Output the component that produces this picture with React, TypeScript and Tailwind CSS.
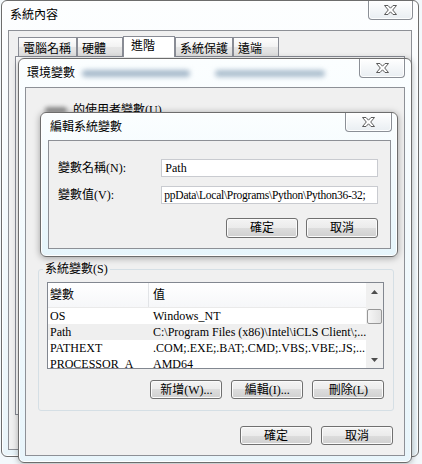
import React from 'react';

const font = "font-['Liberation_Serif','Noto_Sans_CJK_TC',serif]";

function CloseButton({ className }: { className: string }) {
  return (
    <div
      className={`flex items-center justify-center rounded-b-[4px] border border-t-0 border-[#8b8f96] bg-linear-to-b from-[#ffffff] to-[#e9eef2] shadow-[inset_0_0_0_1px_rgba(255,255,255,0.9)] ${className}`}
    >
      <svg width="13" height="10" viewBox="0 0 13 10">
        <polygon
          points="0.5,0.5 4,0.5 6.5,3.2 9,0.5 12.5,0.5 8.7,5 12.5,9.5 9,9.5 6.5,6.8 4,9.5 0.5,9.5 4.3,5"
          fill="#fff"
          stroke="#5b5b5b"
          strokeWidth="1"
          strokeLinejoin="round"
        />
      </svg>
    </div>
  );
}

function Button({ label }: { label: string }) {
  return (
    <div className="flex h-[19px] w-[72px] items-center justify-center rounded-[3px] border border-[#707070] bg-[linear-gradient(to_bottom,#f4f4f4_0%,#ebebeb_50%,#dddddd_50%,#d0d0d0_100%)] shadow-[inset_0_0_0_1px_#fbfbfb]">
      {label}
    </div>
  );
}

type Row = { name: string; value: string; hl?: boolean };

const rows: Row[] = [
  { name: 'OS', value: 'Windows_NT' },
  { name: 'Path', value: 'C:\\Program Files (x86)\\Intel\\iCLS Client\\;...', hl: true },
  { name: 'PATHEXT', value: '.COM;.EXE;.BAT;.CMD;.VBS;.VBE;.JS;...' },
  { name: 'PROCESSOR_A', value: 'AMD64' },
];

const tabs = ['電腦名稱', '硬體', '進階', '系統保護', '遠端'];
const tabWidths = ['w-[59px]', 'w-[46px]', 'w-[52px]', 'w-[58px]', 'w-[46px]'];

export default function App() {
  return (
    <div className={`relative h-[464px] w-[422px] overflow-hidden bg-[#f3f8fb] text-[12px] leading-[14px] text-black ${font}`}>
      {/* 系統內容 */}
      <div className="absolute left-[1px] top-0 flex h-[457px] w-[418px] flex-col rounded-[6px] border border-[#6d6d6d] bg-linear-to-b from-[#fdfeff] to-[#eaf5fa] shadow-[inset_0_0_0_1px_#ffffff]">
        <div className="flex h-[29px] items-start justify-between pl-[8px] pr-[5px]">
          <span className="mt-[7px]">系統內容</span>
          <CloseButton className="h-[19px] w-[45px]" />
        </div>
        <div className="mx-[6px] mb-[6px] flex flex-1 flex-col border border-[#8d9096] bg-[#f0f0f0] px-[6px] pt-[5px]">
          <div className="flex h-[20px] items-end pl-[3px]">
            {tabs.map((t, i) =>
              i === 2 ? (
                <div
                  key={t}
                  className={`relative z-10 -mb-px h-[21px] border border-b-0 border-[#898c95] bg-white pl-[7px] pt-[2px] ${tabWidths[i]}`}
                >
                  {t}
                </div>
              ) : (
                <div
                  key={t}
                  className={`h-[19px] border border-b-0 border-[#898c95] bg-[linear-gradient(to_bottom,#fdfdfd,#f2f2f2_50%,#e6e6e6_50%,#dedede)] pl-[4px] pt-[4px] ${tabWidths[i]}`}
                >
                  {t}
                </div>
              ),
            )}
          </div>
          <div className="h-[359px] border border-[#898c95] bg-white" />
        </div>
      </div>

      {/* 環境變數 */}
      <div className="absolute left-[18px] top-[58px] flex h-[405px] w-[394px] flex-col rounded-[6px] border border-[#6d6d6d] bg-linear-to-b from-[#fbfeff] to-[#e8f5fb] shadow-[inset_0_0_0_1px_#ffffff,0_1px_6px_rgba(0,0,0,0.3)]">
        <div className="flex h-[28px] items-start justify-between pl-[8px] pr-[6px]">
          <div className="mt-[7px] flex items-center">
            <span>環境變數</span>
            <div className="ml-[7px] h-[7px] w-[108px] rounded-full bg-[#a5b8ca] blur-[2.5px]" />
            <div className="ml-[25px] h-[7px] w-[110px] rounded-full bg-[#abbece] blur-[2.5px]" />
          </div>
          <CloseButton className="h-[19px] w-[46px]" />
        </div>
        <div className="mx-[6px] mb-[6px] flex flex-1 flex-col border border-[#8d9096] bg-[#f0f0f0] pl-[12px] pr-[10px]">
          {/* user variables, mostly under the edit dialog */}
          <div className="mt-[15px] flex h-[159px] flex-col">
            <div className="flex items-center pl-[7px]">
              <div className="h-[6px] w-[22px] rounded-full bg-[#8c8c8c] blur-[2px]" />
              <span className="ml-[6px]">的使用者變數(U)</span>
            </div>
          </div>

          <fieldset className="rounded-[3px] border border-[#d5dfe5] pb-[11px]">
            <legend className="ml-[4px] px-[2px]">系統變數(S)</legend>
            <div className="flex flex-col pl-[8px] pr-[9px]">
              <div className="mt-[6px] flex h-[87px] overflow-hidden border border-[#828790] bg-white">
                <div className="flex flex-1 flex-col">
                  <div className="flex h-[25px] shrink-0 items-center border-b border-[#eaeaea] bg-linear-to-b from-[#ffffff] to-[#f6f7f9]">
                    <div className="flex h-full w-[101px] items-center border-r border-[#e2e4e7] pl-[2px]">變數</div>
                    <div className="pl-[4px]">值</div>
                  </div>
                  {rows.map((r) => (
                    <div
                      key={r.name}
                      className={`flex h-[16px] shrink-0 items-center whitespace-nowrap ${r.hl ? 'bg-[#efefef]' : ''}`}
                    >
                      <div className="w-[101px] pl-[2px]">{r.name}</div>
                      <div className="pl-[4px]">{r.value}</div>
                    </div>
                  ))}
                </div>
                <div className="flex w-[17px] flex-col bg-[#f0f0f0]">
                  <div className="flex h-[17px] items-center justify-center">
                    <svg width="7" height="4" viewBox="0 0 7 4">
                      <polygon points="3.5,0 7,4 0,4" fill="#4d4d4d" />
                    </svg>
                  </div>
                  <div className="mx-[1px] mt-[9px] h-[15px] rounded-[2px] border border-[#979797] bg-linear-to-r from-[#f6f6f6] to-[#e2e2e2]" />
                  <div className="flex-1" />
                  <div className="flex h-[17px] items-center justify-center">
                    <svg width="7" height="4" viewBox="0 0 7 4">
                      <polygon points="0,0 7,0 3.5,4" fill="#4d4d4d" />
                    </svg>
                  </div>
                </div>
              </div>
              <div className="mt-[11px] flex justify-end gap-[9px]">
                <Button label="新增(W)..." />
                <Button label="編輯(I)..." />
                <Button label="刪除(L)" />
              </div>
            </div>
          </fieldset>

          <div className="mr-[1px] mt-[15px] flex justify-end gap-[9px]">
            <Button label="確定" />
            <Button label="取消" />
          </div>
        </div>
      </div>

      {/* 編輯系統變數 */}
      <div className="absolute left-[40px] top-[112px] flex h-[145px] w-[358px] flex-col rounded-[6px] border border-[#6d6d6d] bg-linear-to-b from-[#fbfeff] to-[#e6f5fb] shadow-[inset_0_0_0_1px_#ffffff,0_1px_7px_rgba(0,0,0,0.35)]">
        <div className="flex h-[27px] items-start justify-between pl-[9px] pr-[5px]">
          <span className="mt-[7px]">編輯系統變數</span>
          <CloseButton className="h-[19px] w-[47px]" />
        </div>
        <div className="mb-[7px] ml-[7px] mr-[6px] flex flex-1 flex-col border border-[#8d9096] bg-[#f0f0f0] pl-[9px] pr-[12px] pt-[18px]">
          <div className="flex items-center">
            <div className="w-[104px]">變數名稱(N):</div>
            <div className="flex h-[18px] w-[218px] items-center border border-[#c9cbd0] bg-white pl-[3px]">Path</div>
          </div>
          <div className="mt-[9px] flex items-center">
            <div className="w-[104px]">變數值(V):</div>
            <div className="flex h-[18px] w-[218px] items-center overflow-hidden whitespace-nowrap border border-[#c9cbd0] bg-white pl-[2px] text-[11.5px] tracking-[-0.25px]">
              {'ppData\\Local\\Programs\\Python\\Python36-32;'}
            </div>
          </div>
          <div className="mt-[14px] flex justify-end gap-[8px]">
            <div className="flex h-[20px] w-[72px] items-center justify-center rounded-[3px] border border-[#707070] bg-[linear-gradient(to_bottom,#f4f4f4_0%,#ebebeb_50%,#dddddd_50%,#d0d0d0_100%)] shadow-[inset_0_0_0_1px_#fbfbfb]">
              確定
            </div>
            <div className="flex h-[20px] w-[72px] items-center justify-center rounded-[3px] border border-[#707070] bg-[linear-gradient(to_bottom,#f4f4f4_0%,#ebebeb_50%,#dddddd_50%,#d0d0d0_100%)] shadow-[inset_0_0_0_1px_#fbfbfb]">
              取消
            </div>
          </div>
        </div>
      </div>
    </div>
  );
}
